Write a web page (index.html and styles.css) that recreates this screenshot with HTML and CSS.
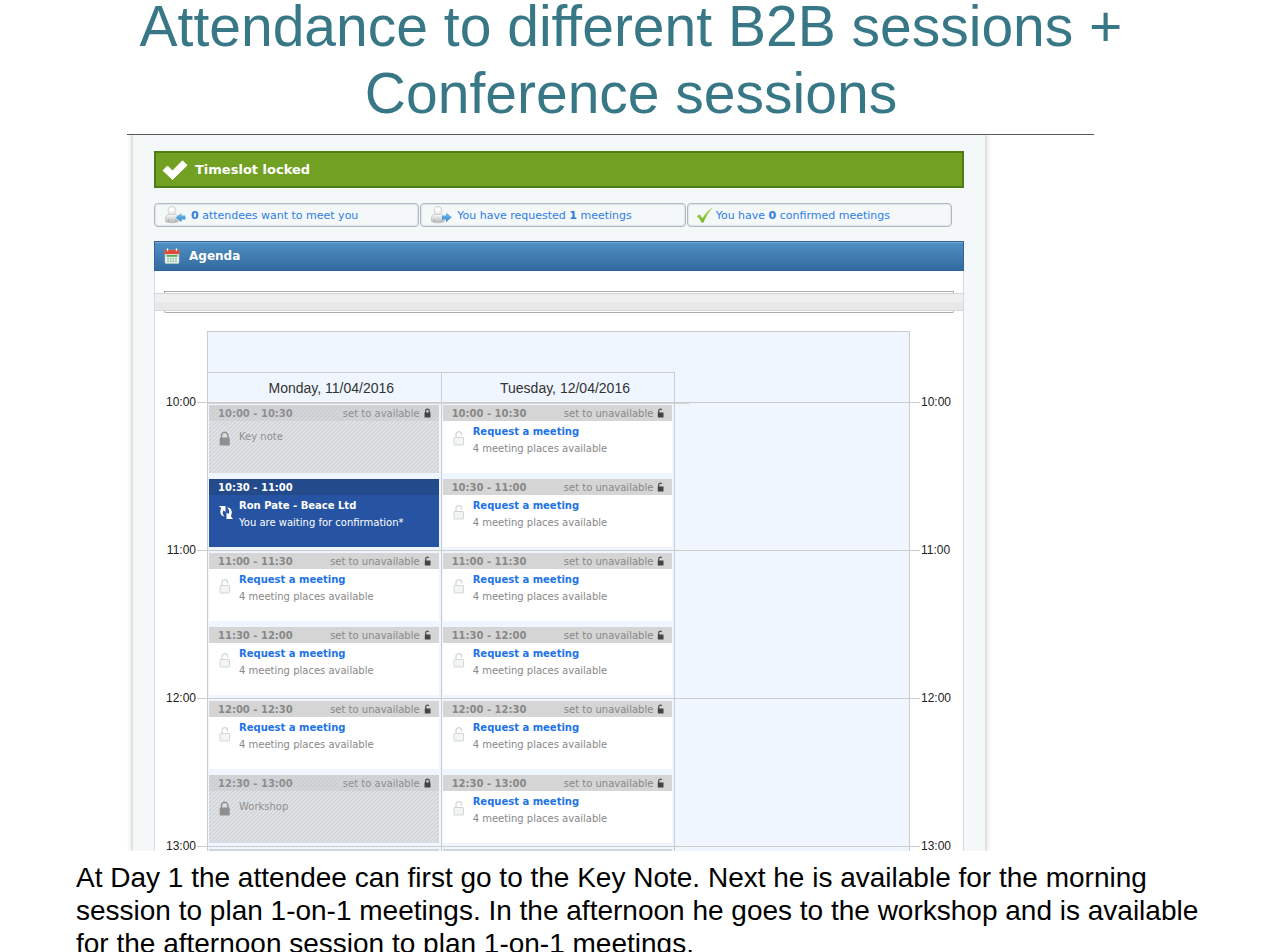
FILE: index.html
```html
<!DOCTYPE html>
<html lang="en">
<head>
<meta charset="utf-8">
<title>Attendance to different B2B sessions + Conference sessions</title>
<link rel="stylesheet" href="styles.css">
</head>
<body>
<svg class="sprite" aria-hidden="true">
  <defs>
    <linearGradient id="g-person" x1="0" y1="0" x2="0" y2="1"><stop offset="0" stop-color="#fbfbfb"/><stop offset="1" stop-color="#b4b4b4"/></linearGradient>
    <linearGradient id="g-arrow" x1="0" y1="0" x2="0" y2="1"><stop offset="0" stop-color="#7cc0ec"/><stop offset="1" stop-color="#2f86cc"/></linearGradient>
    <linearGradient id="g-tick" x1="0" y1="0" x2="0" y2="1"><stop offset="0" stop-color="#b6e070"/><stop offset="1" stop-color="#74b51c"/></linearGradient>
  </defs>
  <symbol id="person" viewBox="0 0 22 20">
    <path d="M1.500 16.500v-3c0-2.600 1.500-4 4-4h5c2.500 0 4 1.400 4 4v3c-3 1.800-10 1.800-13 0z" fill="url(#g-person)" stroke="#c0c0c0" stroke-width=".8"/>
    <path d="M4.500 17v-3M12 17v-3" stroke="#aaa" stroke-width=".8" fill="none"/>
    <circle cx="8" cy="5.500" r="4" fill="#efefef" stroke="#cbcbcb" stroke-width=".8"/>
    <circle cx="7.500" cy="4.500" r="2.300" fill="#fff"/>
  </symbol>
  <symbol id="lock" viewBox="0 0 12 15">
    <path d="M2.500 7V4.500a3.200 3.200 0 0 1 6.400 0V7" fill="none" stroke="currentColor" stroke-width="1.400"/>
    <rect x=".7" y="6.500" width="10" height="8" rx="0.600" fill="currentColor"/>
  </symbol>
  <symbol id="unlock" viewBox="0 0 12 15">
    <path d="M3 7.500V3.500a2.800 2.800 0 0 1 5.600 0v1" fill="none" stroke="#d4d7d7" stroke-width="1.300"/>
    <rect x="1" y="6.500" width="9.500" height="7.500" rx="0.600" fill="#f2f5f5" stroke="#d4d7d7"/>
  </symbol>
  <symbol id="mini-lock" viewBox="0 0 7 10">
    <path d="M1.700 5V3a1.800 1.800 0 0 1 3.600 0v2" fill="none" stroke="#444" stroke-width="1.200"/>
    <rect x="0.500" y="4.500" width="6" height="5" fill="#444"/>
  </symbol>
  <symbol id="mini-unlock" viewBox="0 0 7 10">
    <path d="M1.700 5V2.800C1.700 1.500 3.500.8 4.800 1.600" fill="none" stroke="#555" stroke-width="1.300"/>
    <rect x="0.800" y="4.500" width="5.700" height="5" fill="#444"/>
  </symbol>
</svg>

<main class="slide">
  <h1 class="title">Attendance to different B2B sessions +<br>Conference sessions</h1>
  <hr class="rule">

  <section class="panel">
    <div class="alert" role="status">
      <svg class="alert-icon" viewBox="0 0 26 20" aria-hidden="true"><path d="M1 10.500 5.500 6l5 5L20.500 .8 25 5.300 10.500 19.500z" fill="#fff" stroke="#fff" stroke-linejoin="round"/></svg>
      Timeslot locked
    </div>

    <nav class="stats">
      <a class="stat" href="#">
        <svg class="stat-icon" viewBox="0 0 22 20" aria-hidden="true"><use href="#person"/><path d="M21.500 10.500h-4V8l-6 4.500 6 4.500v-2.500h4z" fill="url(#g-arrow)"/></svg>
        <span><b>0</b> attendees want to meet you</span>
      </a>
      <a class="stat" href="#">
        <svg class="stat-icon" viewBox="0 0 22 20" aria-hidden="true"><use href="#person"/><path d="M12 10.500h4V7.500l5.800 4.800-5.800 4.900v-2.700h-4z" fill="url(#g-arrow)"/></svg>
        <span>You have requested <b>1</b> meetings</span>
      </a>
      <a class="stat" href="#">
        <svg class="stat-check" viewBox="0 0 18 18" aria-hidden="true"><path d="M.8 10.200 3.600 8.300l3 4C9 7.500 12.500 3.500 17.200 1.200 13 5.800 10 10.500 7.500 16.500H5.500C4.500 14 2.800 11.800.8 10.200z" fill="url(#g-tick)"/></svg>
        <span>You have <b>0</b> confirmed meetings</span>
      </a>
    </nav>

    <section class="agenda">
      <h2 class="agenda-title">
        <svg class="agenda-icon" viewBox="0 0 16 16" aria-hidden="true">
          <rect x="1" y="2" width="14" height="13.500" rx="1" fill="#f2f7f2" stroke="#b9c4cc" stroke-width=".6"/>
          <path d="M.6 1.800h14.800v4.400H.6z" fill="#dd4a35"/>
          <path d="M3.500.3v3M12.500.3v3" stroke="#e9eef2" stroke-width="1.300"/>
          <path d="M2.500 7h11v1.800h-11z" fill="#4eae52"/>
          <path d="M3 10.300h10M3 12h10M3 13.700h10" stroke="#8bb79a" stroke-width="1" stroke-dasharray="2 .7"/>
        </svg>
        Agenda
      </h2>

      <div class="strip">
        <div class="strip-edge strip-edge-top"></div>
        <div class="strip-band"></div>
        <div class="strip-edge strip-edge-bottom"></div>
      </div>

      <div class="schedule">
        <div class="axis axis-left"><time>10:00</time><time>11:00</time><time>12:00</time><time>13:00</time></div>

        <div class="calendar">
          <div class="calendar-top"></div>
          <div class="days"><h3 class="day">Monday, 11/04/2016</h3><h3 class="day">Tuesday, 12/04/2016</h3></div>

          <div class="hour hour-first">
            <div class="cell">
              <article class="slot blocked">
                <header class="slot-head"><b>10:00 - 10:30</b><button type="button">set to available<svg><use href="#mini-lock"/></svg></button></header>
                <div class="slot-body"><svg class="state"><use href="#lock"/></svg><p>Key note</p></div>
              </article>
              <article class="slot booked">
                <header class="slot-head"><b>10:30 - 11:00</b></header>
                <div class="slot-body">
                  <svg class="state" viewBox="0 0 14 15"><path d="M0 1h6.500v6L4.600 5.200C3.200 7.200 3.600 9.600 5.500 11.500 1.300 11 .2 6.600 2.300 3.200z" fill="#fff"/><path d="M8 2.500c4.500-.5 6 5 3.800 8.400L14 14H7.500V7.500l2 1.600c1.200-2 .8-4.600-1.500-6.600z" fill="#fff"/></svg>
                  <p><a href="#">Ron Pate - Beace Ltd</a><br>You are waiting for confirmation*</p>
                </div>
              </article>
            </div>
            <div class="cell">
              <article class="slot">
                <header class="slot-head"><b>10:00 - 10:30</b><button type="button">set to unavailable<svg><use href="#mini-unlock"/></svg></button></header>
                <div class="slot-body"><svg class="state"><use href="#unlock"/></svg><p><a href="#">Request a meeting</a><br>4 meeting places available</p></div>
              </article>
              <article class="slot">
                <header class="slot-head"><b>10:30 - 11:00</b><button type="button">set to unavailable<svg><use href="#mini-unlock"/></svg></button></header>
                <div class="slot-body"><svg class="state"><use href="#unlock"/></svg><p><a href="#">Request a meeting</a><br>4 meeting places available</p></div>
              </article>
            </div>
          </div>

          <div class="hour">
            <div class="cell">
              <article class="slot">
                <header class="slot-head"><b>11:00 - 11:30</b><button type="button">set to unavailable<svg><use href="#mini-unlock"/></svg></button></header>
                <div class="slot-body"><svg class="state"><use href="#unlock"/></svg><p><a href="#">Request a meeting</a><br>4 meeting places available</p></div>
              </article>
              <article class="slot">
                <header class="slot-head"><b>11:30 - 12:00</b><button type="button">set to unavailable<svg><use href="#mini-unlock"/></svg></button></header>
                <div class="slot-body"><svg class="state"><use href="#unlock"/></svg><p><a href="#">Request a meeting</a><br>4 meeting places available</p></div>
              </article>
            </div>
            <div class="cell">
              <article class="slot">
                <header class="slot-head"><b>11:00 - 11:30</b><button type="button">set to unavailable<svg><use href="#mini-unlock"/></svg></button></header>
                <div class="slot-body"><svg class="state"><use href="#unlock"/></svg><p><a href="#">Request a meeting</a><br>4 meeting places available</p></div>
              </article>
              <article class="slot">
                <header class="slot-head"><b>11:30 - 12:00</b><button type="button">set to unavailable<svg><use href="#mini-unlock"/></svg></button></header>
                <div class="slot-body"><svg class="state"><use href="#unlock"/></svg><p><a href="#">Request a meeting</a><br>4 meeting places available</p></div>
              </article>
            </div>
          </div>

          <div class="hour">
            <div class="cell">
              <article class="slot">
                <header class="slot-head"><b>12:00 - 12:30</b><button type="button">set to unavailable<svg><use href="#mini-unlock"/></svg></button></header>
                <div class="slot-body"><svg class="state"><use href="#unlock"/></svg><p><a href="#">Request a meeting</a><br>4 meeting places available</p></div>
              </article>
              <article class="slot blocked">
                <header class="slot-head"><b>12:30 - 13:00</b><button type="button">set to available<svg><use href="#mini-lock"/></svg></button></header>
                <div class="slot-body"><svg class="state"><use href="#lock"/></svg><p>Workshop</p></div>
              </article>
            </div>
            <div class="cell">
              <article class="slot">
                <header class="slot-head"><b>12:00 - 12:30</b><button type="button">set to unavailable<svg><use href="#mini-unlock"/></svg></button></header>
                <div class="slot-body"><svg class="state"><use href="#unlock"/></svg><p><a href="#">Request a meeting</a><br>4 meeting places available</p></div>
              </article>
              <article class="slot">
                <header class="slot-head"><b>12:30 - 13:00</b><button type="button">set to unavailable<svg><use href="#mini-unlock"/></svg></button></header>
                <div class="slot-body"><svg class="state"><use href="#unlock"/></svg><p><a href="#">Request a meeting</a><br>4 meeting places available</p></div>
              </article>
            </div>
          </div>

          <div class="hour hour-cut">
            <div class="cell"><div class="slot-cut"></div></div>
            <div class="cell"><div class="slot-cut"></div></div>
          </div>
        </div>

        <div class="axis axis-right"><time>10:00</time><time>11:00</time><time>12:00</time><time>13:00</time></div>
      </div>
    </section>
  </section>

  <p class="caption">At Day 1 the attendee can first go to the Key Note. Next he is available for the morning session to plan 1-on-1 meetings. In the afternoon he goes to the workshop and is available for the afternoon session to plan 1-on-1 meetings.</p>
</main>
</body>
</html>
```
FILE: styles.css
```css
* { box-sizing: border-box; }

html { overflow: hidden; }

body {
  margin: 0;
  background: #fff;
  color: #000;
  font-family: "Liberation Sans", Arial, sans-serif;
}

.sprite { position: absolute; width: 0; height: 0; }

h1, h2, h3, p { margin: 0; font-weight: normal; }
a { color: inherit; text-decoration: none; }
svg { flex: none; }

.slide { display: flow-root; }

.title {
  margin-top: -7px;
  padding: 0 8px 7px 0;
  text-align: center;
  color: #387886;
  font-size: 57px;
  line-height: 67px;
  font-variant-ligatures: none;
}

.rule {
  margin: 0 176px 0 127px;
  border: 0;
  height: 1px;
  background: #5c5557;
}

/* Application panel */
.panel {
  margin: 0 285px 0 133px;
  padding: 16px 21px 0;
  background: #f4f8f9;
  box-shadow: 0 0 5px 1px #c4c4c4;
  clip-path: inset(0 -8px);
  font-family: "DejaVu Sans", Verdana, sans-serif;
}

.alert {
  display: flex;
  align-items: center;
  gap: 7px;
  height: 37px;
  padding-left: 6px;
  border: 2px solid #4c7d16;
  background: #72a023;
  color: #fff;
  font-size: 13px;
  line-height: 17px;
  font-weight: bold;
}
.alert-icon { width: 26px; height: 20px; }

.stats {
  display: grid;
  grid-template-columns: repeat(3, 1fr);
  gap: 1px;
  margin: 15px 12px 14px 0;
}
.stat {
  display: flex;
  align-items: center;
  gap: 5px;
  height: 24px;
  padding-left: 9px;
  border: 1px solid #b3b7bb;
  border-radius: 4px;
  box-shadow: inset 0 0 1px 1px #dde5ef;
  color: #2f7de4;
  font-size: 11px;
}
.stat:last-child { gap: 2px; padding-left: 8px; }
.stat-icon { width: 22px; height: 20px; }
.stat-check { width: 18px; height: 18px; }

/* Agenda box */
.agenda {
  background: #fff;
  border: 1px solid #cfdbe8;
  border-width: 0 1px;
}
.agenda-title {
  display: flex;
  align-items: center;
  gap: 9px;
  height: 30px;
  margin: 0 -1px;
  padding-left: 9px;
  border: 1px solid #2f629f;
  box-shadow: inset 0 1px 0 #79a9d2;
  background: linear-gradient(#5090c4, #336a9f);
  color: #fff;
  font-size: 12px;
  font-weight: bold;
}
.agenda-icon { width: 16px; height: 16px; }

.strip { padding: 20px 0 18px; }
.strip-edge { height: 2px; margin: 0 9px; border: 1px solid #aaa; }
.strip-edge-top { border-bottom: 0; }
.strip-edge-bottom { border-top: 0; border-radius: 0 0 3px 3px; }
.strip-band {
  height: 18px;
  border: 1px solid #d6d6d6;
  border-width: 1px 0;
  background: linear-gradient(#efefef 50%, #e8e8e8 50%);
}

/* Time grid */
.schedule {
  display: grid;
  grid-template-columns: 52px 1fr 53px;
}
.axis {
  padding-top: 63px;
  font-family: "Liberation Sans", Arial, sans-serif;
  font-size: 12px;
  line-height: 16px;
  color: #222;
}
.axis time {
  display: flex;
  align-items: flex-start;
  gap: 1px;
  height: 148px;
}
.axis time:last-child { height: 13px; }
.axis-left time { justify-content: flex-end; }
.axis-left time::after,
.axis-right time::before {
  content: "";
  width: 10px;
  height: 1px;
  margin-top: 8px;
  background: #ccc;
}

.calendar {
  border: 1px solid #ccc;
  border-bottom: 0;
  background: #eff6ff;
}
.calendar-top { height: 40px; }
.days, .hour { display: grid; grid-template-columns: repeat(3, 1fr); }
.day {
  height: 30px;
  padding-left: 14px;
  border: 1px solid #ccc;
  border-width: 1px 1px 0 0;
  font-family: "Liberation Sans", Arial, sans-serif;
  font-size: 14px;
  line-height: 30px;
  text-align: center;
  color: #333;
}
.hour { position: relative; border-top: 1px solid #ccc; }
.hour-first::after {
  content: "";
  position: absolute;
  top: 0;
  left: 0;
  width: calc(66% + 18px);
  height: 1px;
  background: #d4d4d4;
}
.cell {
  display: grid;
  gap: 6px;
  padding: 2px 2px 3px 1px;
  border-right: 1px solid #ccc;
}
.hour-cut .cell { padding-bottom: 0; }
.slot-cut { height: 2px; background: #d2d5d8; }

.slot {
  height: 68px;
  background: #fff;
  color: #888;
  font-size: 10px;
}
.slot-head {
  display: flex;
  align-items: center;
  justify-content: space-between;
  height: 16px;
  padding: 0 8px 0 9px;
  background: #d5d5d5;
}
.slot-head button {
  display: flex;
  align-items: center;
  gap: 4px;
  padding: 0;
  border: 0;
  background: none;
  color: inherit;
  font: inherit;
}
.slot-head svg { width: 7px; height: 10px; }
.slot-body {
  display: flex;
  gap: 8px;
  padding: 2px 0 0 10px;
  line-height: 17px;
}
.slot-body a { color: #2273e6; font-weight: bold; }
.state { width: 12px; height: 15px; margin-top: 8px; }

.blocked {
  background: linear-gradient(135deg, #cfd2d5 12%, #e0e3e6 13% 49%, #cfd2d5 50% 62%, #e0e3e6 63%) 0 0 / 4px 4px;
  color: #8f8f8f;
}
.blocked .slot-head { background: rgba(190, 193, 196, 0.350); }
.blocked p { padding-top: 5px; }

.booked { background: #2754a2; color: #fff; }
.booked .slot-head { background: #234a8b; }
.booked .slot-body a { color: #fff; }
.booked .slot-body { gap: 6px; }
.booked .state { width: 14px; }

.caption {
  padding: 10px 50px 0 76px;
  font-size: 28px;
  line-height: 33px;
}
```
